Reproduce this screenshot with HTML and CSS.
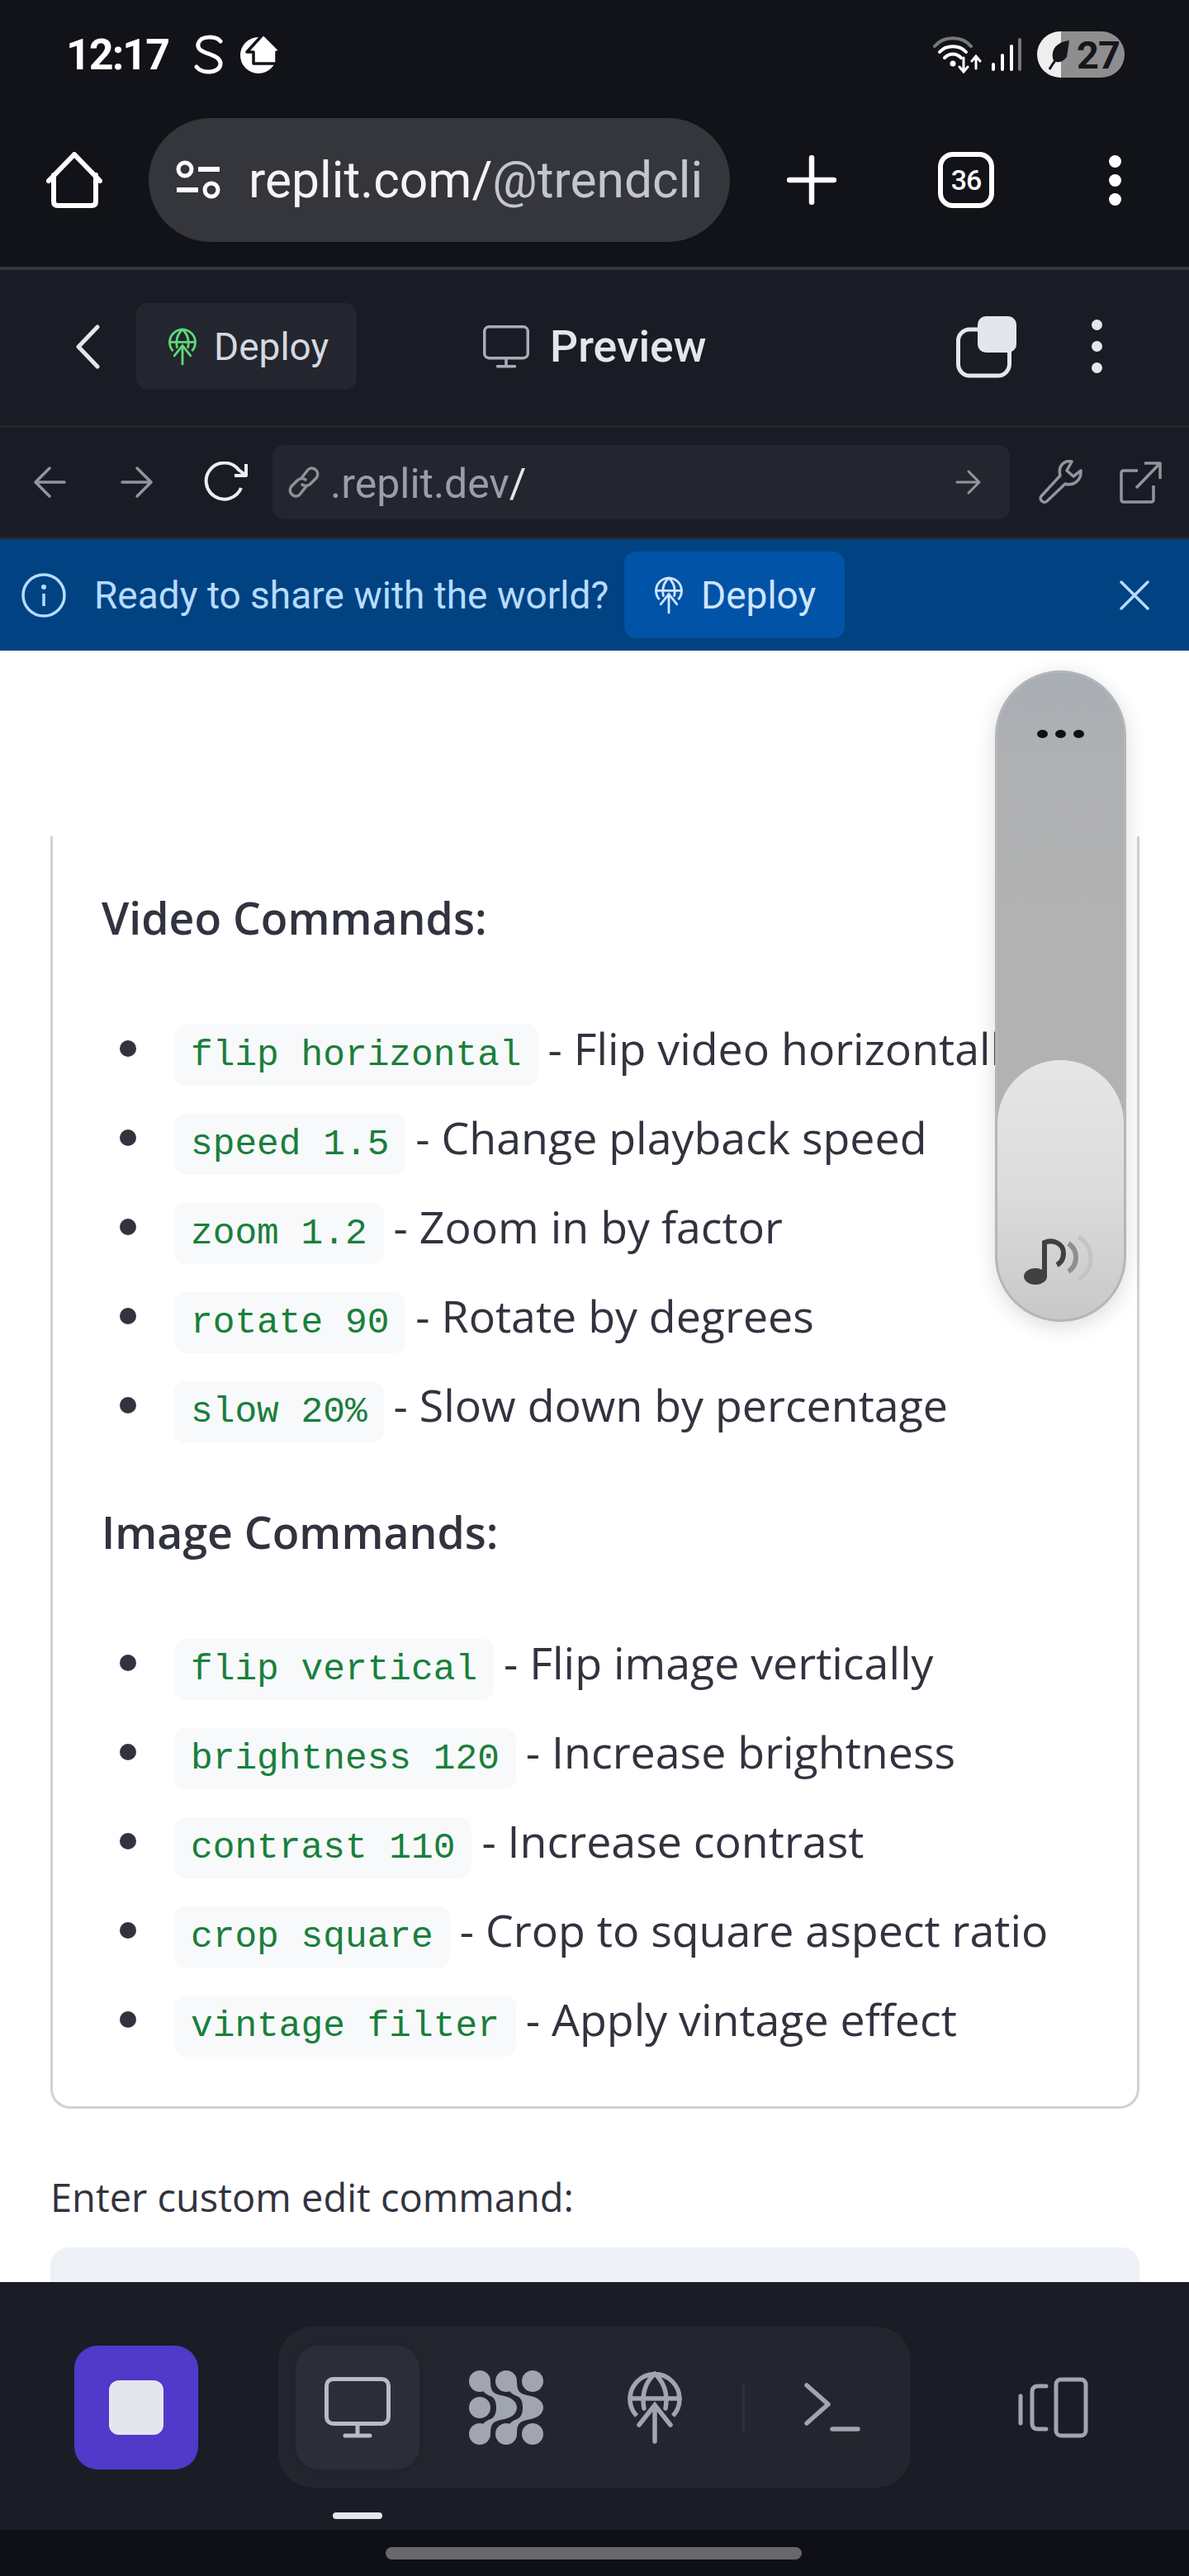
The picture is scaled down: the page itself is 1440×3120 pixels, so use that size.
FILE: index.html
```html
<!doctype html>
<html lang="en">
<head>
  <meta charset="UTF-8">
  <title>Replit Preview</title>
  <link rel="stylesheet" href="styles.css">
</head>
<body>
  <svg class="defs" width="0" height="0">
    <symbol id="globe" viewBox="0 0 66 88">
      <g fill="none" stroke="currentColor" stroke-width="5.5" stroke-linecap="round">
        <path d="M11 54 A30 30 0 1 1 55 54" stroke-linecap="butt"/>
        <path d="M3 33 H63"/>
        <path d="M33 3 C21 14 17 28 20 45 M33 3 C45 14 49 28 46 45"/>
        <path d="M33 85 V42 M14 65 L33 41 L52 65"/>
      </g>
    </symbol>
    <symbol id="monitor" viewBox="0 0 80 74">
      <g fill="none" stroke="currentColor" stroke-width="5" stroke-linecap="round">
        <rect x="2.5" y="2.5" width="75" height="54" rx="8"/>
        <path d="M40 57 V70 M25 71 H55"/>
      </g>
    </symbol>
  </svg>

  <div class="phone">
    <header class="browser">
      <div class="status-bar">
        <div class="status-left">
          <span class="clock">12:17</span>
          <svg class="ic-s" width="36" height="48" viewBox="0 0 36 48"><path d="M32 8 C27 2 8 0 5 11 C2 25 33 21 32 36 C30 48 9 47 3 39" fill="none" stroke="#fff" stroke-width="5" stroke-linecap="round"/></svg>
          <svg width="48" height="48" viewBox="0 0 48 48"><ellipse cx="22" cy="25" rx="22" ry="22" fill="#fff"/><path d="M8 21 L28 -1 L50 21 L44 21 L44 35 L16 35 L16 21 Z" fill="#fff" stroke="#111318" stroke-width="3.5" stroke-linejoin="round"/></svg>
        </div>
        <div class="status-right">
          <svg width="60" height="46" viewBox="0 0 60 46"><g fill="none" stroke-width="4" stroke-linecap="round"><path d="M2 13 C13 0 35 0 46 13" stroke="#77787b"/><path d="M8 20 C16 11 32 11 40 20" stroke="#fff"/><path d="M14 27 C20 21 28 21 34 27" stroke="#fff"/><path d="M37 27 V43 M32 38 L37 44 L42 38 M52 40 V26 M47 31 L52 25 L57 31" stroke="#fff" stroke-width="3"/></g><circle cx="24" cy="34" r="3.5" fill="#fff"/></svg>
          <svg width="38" height="42" viewBox="0 0 38 42"><g stroke-width="4" stroke-linecap="round"><path d="M3 39 V33 M14 39 V22 M25 39 V11" stroke="#fff"/><path d="M35 39 V3" stroke="#77787b"/></g></svg>
          <div class="battery">
            <svg class="leaf" width="28" height="42" viewBox="0 0 28 42"><path d="M3 39 C8 30 12 25 19 18" fill="none" stroke="#15171c" stroke-width="3"/><path d="M27 4 C12 6 5 14 7 26 C9 32 18 32 24 24 Z" fill="#15171c"/></svg>
            <span class="battery-num">27</span>
          </div>
        </div>
      </div>

      <div class="url-row">
        <svg class="ic-home" width="68" height="68" viewBox="0 0 68 68"><path d="M3 35 L34 3 L65 35 M9 28 V60 Q9 65 14 65 H55 Q60 65 60 60 V28" fill="none" stroke="#fff" stroke-width="6" stroke-linecap="round" stroke-linejoin="round"/></svg>
        <div class="url-pill">
          <svg width="56" height="48" viewBox="0 0 56 48"><g fill="none" stroke="#fff" stroke-width="5"><circle cx="12" cy="11" r="8"/><circle cx="44" cy="36" r="8"/><path d="M28 11 H54 M2 36 H28" stroke-width="6"/></g></svg>
          <span class="url-text">replit.com/<span class="url-dim">@trendcli</span></span>
        </div>
        <svg class="ic-plus" width="60" height="60" viewBox="0 0 60 60"><path d="M30 3 V57 M3 30 H57" stroke="#fff" stroke-width="6.5" stroke-linecap="round"/></svg>
        <div class="tab-count">36</div>
        <div class="kebab kebab-white"><i></i><i></i><i></i></div>
      </div>
    </header>

    <section class="repl-head">
      <svg class="ic-back" width="30" height="54" viewBox="0 0 30 54"><path d="M27 3 L4 27 L27 51" fill="none" stroke="#e4e6ed" stroke-width="5" stroke-linecap="round" stroke-linejoin="round"/></svg>
      <div class="deploy-tab">
        <svg class="ic-globe green" width="34" height="46"><use href="#globe"/></svg>
        <span>Deploy</span>
      </div>
      <div class="preview-title">
        <svg class="ic-mon" width="56" height="52"><use href="#monitor"/></svg>
        <span>Preview</span>
      </div>
      <svg class="ic-overlap" width="74" height="76" viewBox="0 0 74 76"><rect x="2.5" y="17" width="62" height="56" rx="14" fill="none" stroke="#e4e6ed" stroke-width="5"/><rect x="26" y="1" width="47" height="44" rx="10" fill="#e4e6ed"/></svg>
      <div class="kebab kebab-soft"><i></i><i></i><i></i></div>
    </section>

    <section class="repl-tools">
      <svg class="tool-back" width="40" height="40" viewBox="0 0 40 40"><path d="M38 20 H3 M20 3 L3 20 L20 37" fill="none" stroke="#92959d" stroke-width="3.5" stroke-linecap="round" stroke-linejoin="round"/></svg>
      <svg class="tool-fwd" width="40" height="40" viewBox="0 0 40 40"><path d="M2 20 H37 M20 3 L37 20 L20 37" fill="none" stroke="#92959d" stroke-width="3.5" stroke-linecap="round" stroke-linejoin="round"/></svg>
      <svg class="tool-reload" width="56" height="50" viewBox="0 0 56 50"><path d="M46 32 A22 22 0 1 1 43 10 L52 17 M52 3 V17 H38" fill="none" stroke="#eceef2" stroke-width="4" stroke-linejoin="round"/></svg>
      <div class="addr">
        <svg width="42" height="42" viewBox="0 0 42 42"><g fill="none" stroke="#8f929a" stroke-width="3.5" stroke-linecap="round"><path d="M18 16 L26 6 C31 0 42 8 36 16 L29 23 C26 26 22 26 19 24"/><path d="M24 26 L16 36 C11 42 0 34 6 26 L13 19 C16 16 20 16 23 18"/></g></svg>
        <span class="addr-text">.replit.dev<span class="addr-slash">/</span></span>
        <svg class="addr-go" width="32" height="32" viewBox="0 0 32 32"><path d="M2 16 H29 M16 3 L29 16 L16 29" fill="none" stroke="#92959d" stroke-width="3" stroke-linecap="round" stroke-linejoin="round"/></svg>
      </div>
      <svg class="tool-wrench" width="54" height="54" viewBox="0 0 54 54"><path d="M40 2 C30 0 23 8 26 19 L3 44 C0 48 6 54 10 50 L32 29 C42 32 52 25 51 13 L42 20 L34 13 Z" fill="none" stroke="#92959d" stroke-width="3.5" stroke-linejoin="round"/></svg>
      <svg class="tool-open" width="52" height="52" viewBox="0 0 52 52"><path d="M22 12 H5 Q2 12 2 15 V47 Q2 50 5 50 H38 Q41 50 41 47 V30 M20 33 L49 3 M30 3 H49 V22" fill="none" stroke="#92959d" stroke-width="3.5" stroke-linejoin="round"/></svg>
    </section>

    <section class="banner">
      <svg class="ic-info" width="54" height="54" viewBox="0 0 54 54"><circle cx="27" cy="27" r="25" fill="none" stroke="#b5dcff" stroke-width="3.5"/><circle cx="27" cy="17" r="3" fill="#b5dcff"/><path d="M27 25 V40" stroke="#b5dcff" stroke-width="3.5"/></svg>
      <span class="banner-text">Ready to share with the world?</span>
      <div class="banner-btn">
        <svg class="ic-globe pale" width="34" height="46"><use href="#globe"/></svg>
        <span>Deploy</span>
      </div>
      <svg class="ic-close" width="36" height="36" viewBox="0 0 36 36"><path d="M2 2 L34 34 M34 2 L2 34" stroke="#b5dcff" stroke-width="3.5" stroke-linecap="round"/></svg>
    </section>

    <main class="page">
      <div class="card">
        <h3>Video Commands:</h3>
        <ul>
          <li><code>flip horizontal</code> - Flip video horizontally</li>
          <li><code>speed 1.5</code> - Change playback speed</li>
          <li><code>zoom 1.2</code> - Zoom in by factor</li>
          <li><code>rotate 90</code> - Rotate by degrees</li>
          <li><code>slow 20%</code> - Slow down by percentage</li>
        </ul>
        <h3 class="second">Image Commands:</h3>
        <ul>
          <li><code>flip vertical</code> - Flip image vertically</li>
          <li><code>brightness 120</code> - Increase brightness</li>
          <li><code>contrast 110</code> - Increase contrast</li>
          <li><code>crop square</code> - Crop to square aspect ratio</li>
          <li><code>vintage filter</code> - Apply vintage effect</li>
        </ul>
      </div>
      <label class="field-label">Enter custom edit command:</label>
      <div class="field"></div>
    </main>

    <footer class="dock">
      <div class="dock-row">
        <div class="stop"><i></i></div>
        <div class="tabs">
          <div class="tab active"><svg class="ic-dock-mon" width="80" height="74"><use href="#monitor"/></svg></div>
          <svg class="ic-agent" width="90" height="90" viewBox="0 0 90 90">
            <g fill="#a0a5af">
              <circle cx="13" cy="13" r="13"/><circle cx="45" cy="13" r="13"/><circle cx="77" cy="13" r="13"/>
              <circle cx="13" cy="45" r="13"/>
              <circle cx="13" cy="77" r="13"/><circle cx="45" cy="77" r="13"/><circle cx="77" cy="77" r="13"/>
              <path d="M14 14 H26 C26 26 30 28 38 30 C52 32 58 38 58 45 C58 52 52 58 38 60 C30 62 26 64 26 76 H14 C14 62 24 60 28 58 C32 55 33 50 33 45 C33 40 32 35 28 32 C24 30 14 28 14 14 Z"/>
              <path transform="translate(32 0)" d="M14 14 H26 C26 26 30 28 38 30 C52 32 58 38 58 45 C58 52 52 58 38 60 C30 62 26 64 26 76 H14 C14 62 24 60 28 58 C32 55 33 50 33 45 C33 40 32 35 28 32 C24 30 14 28 14 14 Z"/>
            </g>
          </svg>
          <svg class="ic-dock-globe" width="66" height="88"><use href="#globe"/></svg>
          <span class="tabs-sep"></span>
          <svg class="ic-term" width="68" height="60" viewBox="0 0 68 60"><path d="M3 3 L29 26 L3 49 M34 56 H65" fill="none" stroke="#a0a5af" stroke-width="5.5" stroke-linecap="round" stroke-linejoin="round"/></svg>
        </div>
        <svg class="ic-panel" width="86" height="74" viewBox="0 0 86 74"><g fill="none" stroke="#a0a5af" stroke-width="5" stroke-linecap="round"><path d="M3 23 V56"/><path d="M34 11 H24 Q17 11 17 18 V56 Q17 63 24 63 H34"/><rect x="46" y="3" width="36" height="68" rx="6"/></g></svg>
      </div>
      <div class="dock-mark"></div>
    </footer>

    <div class="gesture"><span></span></div>

    <div class="float-pill">
      <div class="float-dots"><i></i><i></i><i></i></div>
      <div class="float-knob">
        <svg width="86" height="62" viewBox="0 0 86 62"><ellipse cx="14" cy="50" rx="14" ry="10" fill="#404040"/><path d="M25 50 V9 C34 5 48 9 48 22 C48 30 44 34 40 36" fill="none" stroke="#404040" stroke-width="6"/><path d="M54 10 C66 18 66 36 54 44" fill="none" stroke="#8e8e8e" stroke-width="6"/><path d="M66 2 C86 14 86 42 66 54" fill="none" stroke="#c4c4c4" stroke-width="5"/></svg>
      </div>
    </div>
  </div>
</body>
</html>
```

FILE: styles.css
```css
* {
  box-sizing: border-box;
}
html, body {
  margin: 0;
  padding: 0;
}
body {
  width: 1440px;
  height: 3120px;
  overflow: hidden;
  background: #fff;
  font-family: 'Roboto', sans-serif;
}
.defs {
  position: absolute;
}
.phone {
  position: relative;
  width: 1440px;
  height: 3120px;
  display: flex;
  flex-direction: column;
  overflow: hidden;
}
svg {
  display: block;
  flex: none;
}

/* browser chrome */
.browser {
  height: 327px;
  background: #111318;
  border-bottom: 4px solid #35363b;
}
.status-bar {
  height: 143px;
  padding: 38px 78px 0 80px;
  display: flex;
  justify-content: space-between;
  align-items: flex-start;
}
.status-left {
  display: flex;
  align-items: center;
  height: 56px;
}
.clock {
  font-size: 52px;
  font-weight: 700;
  color: #fff;
  width: 155px;
  letter-spacing: -2px;
}
.ic-s {
  margin-right: 20px;
}
.status-right {
  display: flex;
  align-items: center;
  height: 56px;
}
.status-right svg:nth-child(1) {
  margin-right: 10px;
}
.status-right svg:nth-child(2) {
  margin-right: 18px;
}
.battery {
  width: 106px;
  height: 56px;
  border-radius: 28px;
  background: linear-gradient(90deg, #eeeeee 29px, #8e8e8e 29px);
  display: flex;
  align-items: center;
  padding-left: 12px;
}
.battery-num {
  font-size: 47px;
  font-weight: 700;
  color: #15171c;
  margin-left: -2px;
  letter-spacing: -1px;
}
.url-row {
  height: 150px;
  display: flex;
  align-items: center;
}
.ic-home {
  margin-left: 56px;
  margin-right: 56px;
}
.url-pill {
  width: 704px;
  height: 150px;
  border-radius: 75px;
  background: #35363b;
  display: flex;
  align-items: center;
  padding-left: 32px;
  gap: 33px;
}
.url-text {
  font-size: 60.5px;
  color: #f4f4f8;
  white-space: nowrap;
}
.url-dim {
  color: #c4c5cd;
}
.ic-plus {
  margin-left: 69px;
}
.tab-count {
  margin-left: 123px;
  width: 68px;
  height: 68px;
  border: 6px solid #fff;
  border-radius: 18px;
  color: #fff;
  font-size: 34px;
  font-weight: 500;
  display: flex;
  align-items: center;
  justify-content: center;
  letter-spacing: -1px;
}
.kebab {
  display: flex;
  flex-direction: column;
}
.kebab i {
  display: block;
  border-radius: 50%;
}
.kebab-white {
  margin-left: 139px;
  gap: 8px;
}
.kebab-white i {
  width: 15px;
  height: 15px;
  background: #fff;
}

/* repl header */
.repl-head {
  height: 191px;
  background: #191c24;
  border-bottom: 3px solid #24262e;
  display: flex;
  align-items: center;
  padding-bottom: 3px;
}
.ic-back {
  margin-left: 91px;
}
.deploy-tab {
  margin-left: 44px;
  width: 267px;
  height: 105px;
  background: #23262e;
  border-radius: 14px;
  display: flex;
  align-items: center;
  padding-left: 39px;
  gap: 21px;
  font-size: 46px;
  color: #d5d8df;
}
.ic-globe.green {
  color: #5cd97a;
}
.ic-globe.pale {
  color: #cfe5ff;
}
.preview-title {
  margin-left: 153px;
  display: flex;
  align-items: center;
  gap: 25px;
  font-size: 53.5px;
  font-weight: 500;
  color: #e4e6ed;
}
.ic-mon {
  color: #a9acb5;
}
.ic-overlap {
  margin-left: 303px;
}
.kebab-soft {
  margin-left: 90px;
  gap: 13px;
}
.kebab-soft i {
  width: 13px;
  height: 13px;
  background: #e4e6ed;
}

/* repl address bar */
.repl-tools {
  height: 135px;
  background: #191c24;
  border-bottom: 3px solid #24262e;
  display: flex;
  align-items: center;
}
.tool-back {
  margin-left: 40px;
}
.tool-fwd {
  margin-left: 66px;
}
.tool-reload {
  margin-left: 60px;
}
.addr {
  margin-left: 28px;
  width: 893px;
  height: 90px;
  background: #23262e;
  border-radius: 14px;
  display: flex;
  align-items: center;
  padding-left: 17px;
  gap: 11px;
}
.addr-text {
  font-size: 50px;
  color: #9a9ea8;
  padding-top: 4px;
}
.addr-slash {
  color: #e4e6ed;
}
.addr-go {
  margin-left: auto;
  margin-right: 34px;
}
.tool-wrench {
  margin-left: 35px;
}
.tool-open {
  margin-left: 44px;
}

/* deploy banner */
.banner {
  height: 135px;
  background: #014282;
  display: flex;
  align-items: center;
  flex: none;
}
.ic-info {
  margin-left: 26px;
}
.banner-text {
  margin-left: 34px;
  font-size: 46px;
  color: #b5dcff;
  width: 642px;
  white-space: nowrap;
}
.banner-btn {
  width: 267px;
  height: 105px;
  background: #0053a6;
  border-radius: 14px;
  display: flex;
  align-items: center;
  padding-left: 37px;
  gap: 22px;
  font-size: 46px;
  color: #cfe5ff;
}
.ic-close {
  margin-left: 333px;
}

/* page content */
.page {
  flex: 1;
  min-height: 0;
  overflow: hidden;
  background: #fff;
  padding: 225px 60px 0 61px;
  font-family: 'Open Sans', sans-serif;
  color: #31333f;
}
.card {
  height: 1541px;
  border: 3px solid #d0d1d4;
  border-top: none;
  border-radius: 0 0 24px 24px;
  padding: 59px 0 0 59px;
}
.card h3 {
  margin: 0 0 64px;
  font-size: 53.5px;
  line-height: 80px;
  font-weight: 600;
}
.card h3.second {
  margin-top: 60px;
}
.card ul {
  margin: 0;
  padding: 0 0 0 88px;
  list-style: none;
}
.card li {
  height: 108px;
  line-height: 108px;
  font-size: 53.7px;
  white-space: nowrap;
}
.card li::before {
  content: "";
  display: inline-block;
  width: 20px;
  height: 20px;
  border-radius: 50%;
  background: #31333f;
  margin-left: -66px;
  margin-right: 46px;
  vertical-align: 10px;
}
.card code {
  font-family: 'Liberation Mono', monospace;
  font-size: 44.5px;
  color: #1a7f3c;
  background: #f8f9fb;
  border-radius: 14px;
  padding: 12px 20px;
  margin-right: -2px;
}
.field-label {
  display: block;
  margin-top: 74px;
  font-size: 47px;
  line-height: 66px;
}
.field {
  margin-top: 28px;
  height: 90px;
  background: #eef1f6;
  border-radius: 22px;
}

/* bottom dock */
.dock {
  height: 300px;
  background: #1a1d25;
  flex: none;
  padding: 54px 0 0 90px;
}
.dock-row {
  display: flex;
  align-items: center;
  height: 195px;
}
.stop {
  width: 150px;
  height: 150px;
  border-radius: 28px;
  background: #5139c9;
  display: flex;
  align-items: center;
  justify-content: center;
}
.stop i {
  display: block;
  width: 66px;
  height: 66px;
  background: #e4e6ed;
  border-radius: 12px;
}
.tabs {
  margin-left: 97px;
  width: 766px;
  height: 195px;
  border-radius: 42px;
  background: #23262e;
  display: flex;
  align-items: center;
  padding-left: 21px;
}
.tab {
  width: 150px;
  height: 150px;
  border-radius: 28px;
  display: flex;
  align-items: center;
  justify-content: center;
}
.tab.active {
  background: #2b2d38;
  box-shadow: 0 0 14px rgba(0, 0, 0, 0.12);
}
.ic-dock-mon {
  color: #b8bbc4;
}
.ic-agent {
  margin-left: 60px;
}
.ic-dock-globe {
  margin-left: 102px;
  color: #a0a5af;
}
.tabs-sep {
  width: 3px;
  height: 60px;
  background: #2e313b;
  margin-left: 73px;
}
.ic-term {
  margin-left: 72px;
}
.ic-panel {
  margin-left: 130px;
}
.dock-mark {
  margin: 30px 0 0 313px;
  width: 60px;
  height: 8px;
  border-radius: 4px;
  background: #e4e6ed;
}
.gesture {
  height: 56px;
  background: #0f1017;
  flex: none;
  padding: 21px 0 0 467px;
}
.gesture span {
  display: block;
  width: 504px;
  height: 15px;
  border-radius: 8px;
  background: #68686c;
}

/* floating media pill */
.float-pill {
  position: absolute;
  left: 1205px;
  top: 812px;
  width: 159px;
  height: 789px;
  border-radius: 80px;
  background: linear-gradient(180deg, #a8aeb5 0%, #aeb0b2 12%, #b2b2b2 40%);
  border: 3px solid #b4b6b8;
  box-shadow: 0 6px 26px rgba(0, 0, 0, 0.14);
}
.float-dots {
  display: flex;
  justify-content: center;
  gap: 9px;
  margin-top: 69px;
}
.float-dots i {
  display: block;
  width: 13px;
  height: 10px;
  border-radius: 50%;
  background: #111;
}
.float-knob {
  position: absolute;
  left: 0;
  right: 0;
  bottom: 0;
  height: 314px;
  border-radius: 78px;
  background: linear-gradient(180deg, #e6e6e6 0%, #dcdcdc 50%, #c8c8c8 100%);
  display: flex;
  justify-content: center;
  align-items: flex-end;
  padding: 0 4px 40px 0;
}
```
